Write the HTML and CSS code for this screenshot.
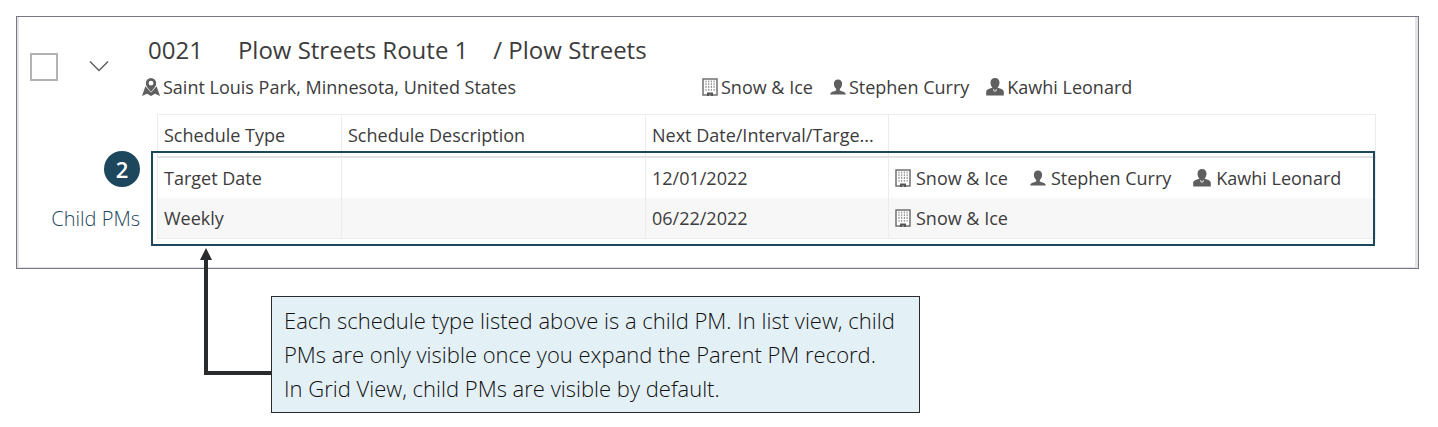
FILE: index.html
```html
<!DOCTYPE html>
<html lang="en">
<head>
<meta charset="utf-8">
<title>PM list</title>
<link rel="stylesheet" href="styles.css">
</head>
<body>
<svg class="sprite" aria-hidden="true">
  <symbol id="building" viewBox="0 0 16 18">
    <path d="M1 1h14v16H1z" fill="#fff" stroke="#707070" stroke-width="1.500"/>
    <path d="M4 2.500v11M6.700 2.500v11M9.400 2.500v11M12.100 2.500v11" stroke="#999" stroke-width="1.200" stroke-dasharray="1.900 .9"/>
    <path d="M5 14.500h6V18H9v-1.500H7V18H5z" fill="#555"/>
  </symbol>
  <symbol id="person" viewBox="0 0 16 16">
    <path d="M8 .5C5.400.5 3.900 2.200 3.900 4.700c0 2.200.9 4 2.300 5.100v1.600C4 12.400.4 12.400.2 15.500h15.600c-.2-3.100-3.800-3.100-6-4.100V9.800c1.400-1.100 2.300-2.900 2.300-5.100C12.100 2.200 10.600.5 8 .5z" fill="#5f5f5f"/>
  </symbol>
  <symbol id="manager" viewBox="0 0 18 18">
    <path d="M9 0C6.200 0 4.500 1.900 4.500 4.500c0 2.200.8 4.100 2 5.200C3.200 10.700.3 11 .2 14v3.500h17.600V14c-.1-3-3-3.300-6.300-4.300 1.200-1.100 2-3 2-5.200C13.500 1.900 11.800 0 9 0z" fill="#5f5f5f"/>
    <path d="M7 11 8.300 14.500l.3-2.200-.5-.9zM11 11 9.700 14.500l-.3-2.200.5-.9z" fill="#fff"/>
  </symbol>
  <symbol id="map-pin" viewBox="0 0 18 18">
    <path d="M9 0a5.200 5.200 0 0 0-5.200 5.200c0 3.200 2.700 5.200 5.200 8.600 2.500-3.400 5.200-5.400 5.200-8.600A5.200 5.200 0 0 0 9 0zm0 2.800a2.400 2.400 0 1 1 0 4.800 2.400 2.400 0 0 1 0-4.800z" fill="#5f5f5f"/>
    <path d="M3.400 8.200 0 18l5-2.200L9 18l4-2.200 5 2.200-3.400-9.800L9 14.500z" fill="#5f5f5f"/>
  </symbol>
</svg>

<main class="page">
  <section class="card">
    <div class="card-body">
      <header class="record">
        <input class="check" type="checkbox" aria-label="Select PM 0021">
        <button class="toggle" type="button" aria-label="Collapse record" aria-expanded="true">
          <svg width="20" height="12" viewBox="0 0 20 12"><path d="M1 1.500l9 9 9-9" fill="none" stroke="#606060" stroke-width="1.500"/></svg>
        </button>
        <div class="summary">
          <h1 class="title"><span class="number">0021</span><span class="name">Plow Streets Route 1</span><span>/ Plow Streets</span></h1>
          <div class="details">
            <span class="location"><svg class="icon"><use href="#map-pin"/></svg>Saint Louis Park, Minnesota, United States</span>
            <div class="tags">
              <span class="tag"><svg class="icon narrow"><use href="#building"/></svg>Snow &amp; Ice</span>
              <span class="tag"><svg class="icon small"><use href="#person"/></svg>Stephen Curry</span>
              <span class="tag"><svg class="icon"><use href="#manager"/></svg>Kawhi Leonard</span>
            </div>
          </div>
        </div>
      </header>
      <div class="children">
        <aside class="note">
          <span class="badge">2</span>
          <span class="note-label">Child PMs</span>
        </aside>
        <div class="table-wrap">
          <table class="schedules">
            <colgroup><col class="col-type"><col class="col-desc"><col class="col-date"><col></colgroup>
            <thead>
              <tr><th>Schedule Type</th><th>Schedule Description</th><th>Next Date/Interval/Targe...</th><th></th></tr>
            </thead>
            <tbody>
              <tr>
                <td>Target Date</td><td></td><td>12/01/2022</td>
                <td><div class="tags">
                  <span class="tag"><svg class="icon narrow"><use href="#building"/></svg>Snow &amp; Ice</span>
                  <span class="tag"><svg class="icon small"><use href="#person"/></svg>Stephen Curry</span>
                  <span class="tag"><svg class="icon"><use href="#manager"/></svg>Kawhi Leonard</span>
                </div></td>
              </tr>
              <tr>
                <td>Weekly</td><td></td><td>06/22/2022</td>
                <td><div class="tags"><span class="tag"><svg class="icon narrow"><use href="#building"/></svg>Snow &amp; Ice</span></div></td>
              </tr>
            </tbody>
          </table>
          <div class="highlight"></div>
        </div>
      </div>
    </div>
  </section>
  <div class="callout">
    <svg class="arrow" width="74" height="130" viewBox="0 0 74 130" aria-hidden="true">
      <path d="M74 125H8V10" fill="none" stroke="#292b2c" stroke-width="4"/>
      <path d="M8 0l6 12H2z" fill="#292b2c"/>
    </svg>
    Each schedule type listed above is a child PM. In list view, child<br>
    PMs are only visible once you expand the Parent PM record.<br>
    In Grid View, child PMs are visible by default.
  </div>
</main>
</body>
</html>
```

FILE: styles.css
```css
* { box-sizing: border-box; }
body {
  margin: 0;
  background: #fff;
  color: #3c3c3c;
  font: 18px/24px "Open Sans", "Noto Sans", sans-serif;
}
.sprite { position: absolute; width: 0; height: 0; }
.page { padding: 16px 19px 14px 16px; }

.card { border: 1px solid #767884; }
.card-body {
  padding: 18px 39px 28px 11px;
  border: solid #e3e3e6;
  border-width: 0 3px 1px 2px;
}

.record { display: flex; align-items: flex-start; }
.check {
  appearance: none;
  flex: none;
  width: 28px;
  height: 28px;
  margin: 18px 0 0;
  border: 2px solid #b3b3b3;
  background: #fff;
}
.toggle {
  flex: none;
  width: 22px;
  height: 22px;
  margin: 20px 32px 0 30px;
  padding: 0;
  border: 0;
  background: none;
}
.toggle svg { display: block; margin: 0 auto; }
.summary { flex: 1; }
.title {
  display: flex;
  margin: 0;
  padding-left: 6px;
  font-size: 24px;
  line-height: 30px;
  font-weight: 400;
}
.number { margin-right: 35px; }
.name { margin-right: 25px; }
.details { display: flex; margin-top: 10px; }
.location { display: flex; align-items: center; width: 560px; gap: 3px; }
.tags { display: flex; gap: 17px; }
.tag { display: flex; align-items: center; gap: 3px; white-space: nowrap; }
.icon { flex: none; width: 18px; height: 18px; }
.icon.narrow { width: 16px; }
.icon.small { width: 16px; height: 16px; }

.children { display: flex; margin-top: 15px; }
.note {
  flex: none;
  width: 127px;
  padding: 37px 17px 0 0;
  text-align: right;
}
.badge {
  display: block;
  width: 36px;
  height: 36px;
  margin: 0 0 20px auto;
  border-radius: 50%;
  background: #1c475c;
  color: #fff;
  font-size: 22px;
  font-weight: 600;
  line-height: 36px;
  text-align: center;
}
.note-label {
  display: block;
  color: #1c475c;
  font-size: 20px;
  line-height: 24px;
  font-weight: 300;
  white-space: nowrap;
}

.table-wrap { position: relative; flex: 1; }
.schedules {
  width: 100%;
  table-layout: fixed;
  border-collapse: collapse;
  border: 1px solid #ececec;
}
.col-type { width: 184px; }
.col-desc { width: 304px; }
.col-date { width: 243px; }
.schedules th,
.schedules td {
  height: 41px;
  padding: 0 6px;
  border-right: 1px solid #ececec;
  font-weight: 400;
  text-align: left;
  white-space: nowrap;
}
.schedules th { height: 42px; }
.schedules .tags { gap: 22px; }
.schedules .tag { gap: 5px; }
.schedules thead tr { border-bottom: 2px solid #e2e2e2; }
.schedules tbody tr:last-child { background: #f7f7f7; }
.highlight {
  position: absolute;
  inset: 37px 1px -7px -6px;
  border: 2px solid #1c475c;
}

.callout {
  position: relative;
  width: fit-content;
  margin: 27px 0 0 255px;
  padding: 6px 24px 7px 12px;
  border: 1px solid #292b2c;
  background: #e3f0f6;
  color: #111;
  font-size: 22px;
  line-height: 34px;
  font-weight: 300;
}
.arrow { position: absolute; right: 100%; top: -49px; }
```
